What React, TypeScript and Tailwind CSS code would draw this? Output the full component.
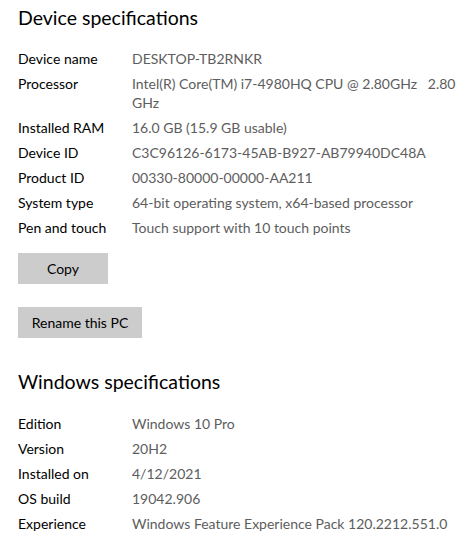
const deviceSpecs: [string, string][] = [
  ["Device name", "DESKTOP-TB2RNKR"],
  ["Processor", "Intel(R) Core(TM) i7-4980HQ CPU @ 2.80GHz   2.80\nGHz"],
  ["Installed RAM", "16.0 GB (15.9 GB usable)"],
  ["Device ID", "C3C96126-6173-45AB-B927-AB79940DC48A"],
  ["Product ID", "00330-80000-00000-AA211"],
  ["System type", "64-bit operating system, x64-based processor"],
  ["Pen and touch", "Touch support with 10 touch points"],
];

const windowsSpecs: [string, string][] = [
  ["Edition", "Windows 10 Pro"],
  ["Version", "20H2"],
  ["Installed on", "4/12/2021"],
  ["OS build", "19042.906"],
  ["Experience", "Windows Feature Experience Pack 120.2212.551.0"],
];

function SpecList({ items }: { items: [string, string][] }) {
  return (
    <div className="flex flex-col">
      {items.map(([label, value]) => (
        <div key={label} className="flex py-[3px] text-[14px] leading-[19px]">
          <div className="w-[114px] shrink-0 text-black">{label}</div>
          <div className="flex-1 whitespace-pre text-[#5d5d5d]">{value}</div>
        </div>
      ))}
    </div>
  );
}

function Heading({ children }: { children: string }) {
  return <h2 className="text-[19.5px] leading-[28px] text-black">{children}</h2>;
}

export default function App() {
  return (
    <div className="h-[540px] w-[467px] overflow-hidden bg-white px-[18px] pt-[4px] font-['Lato',sans-serif]">
      <Heading>Device specifications</Heading>
      <div className="mt-[14px]">
        <SpecList items={deviceSpecs} />
      </div>
      <button className="mt-[13px] block h-[31px] w-[90px] bg-[#cccccc] text-[14px] text-black">
        Copy
      </button>
      <button className="mt-[23px] block h-[31px] w-[124px] bg-[#cccccc] text-[14px] text-black">
        Rename this PC
      </button>
      <div className="mt-[30px]">
        <Heading>Windows specifications</Heading>
      </div>
      <div className="mt-[15px]">
        <SpecList items={windowsSpecs} />
      </div>
    </div>
  );
}
